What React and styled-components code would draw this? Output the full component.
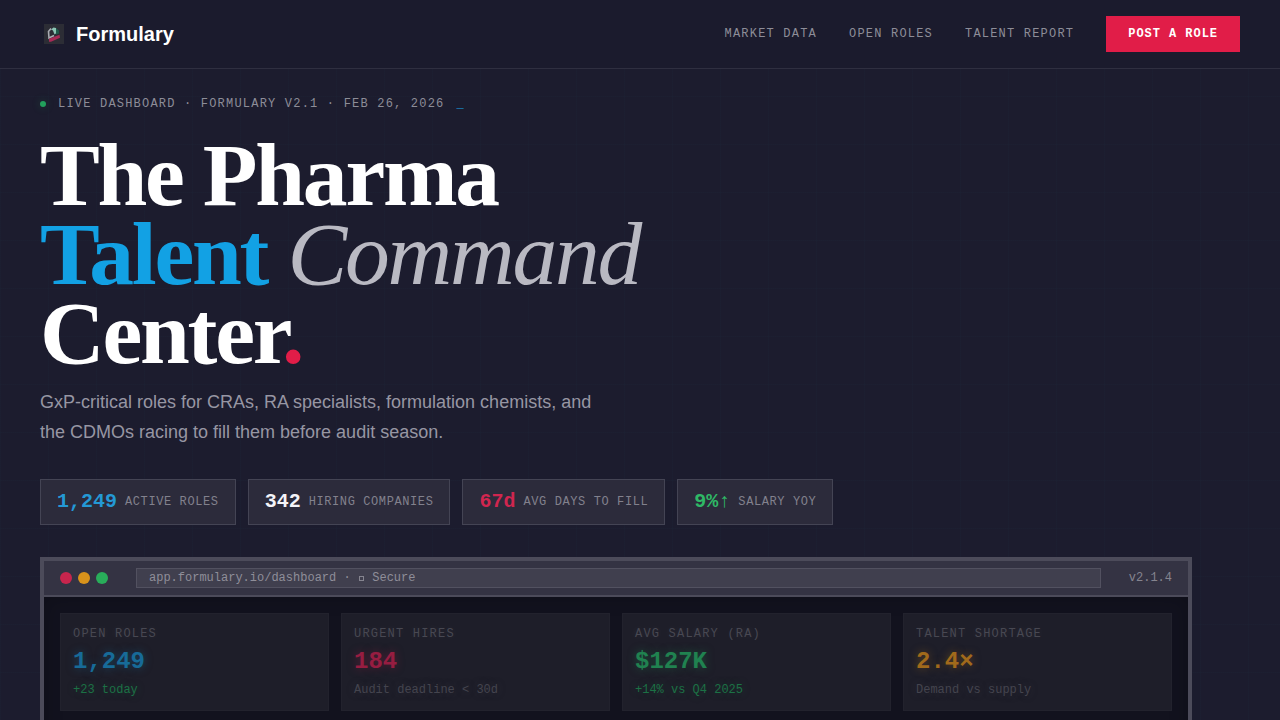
import React from 'react';
import styled, { createGlobalStyle } from 'styled-components';

const GlobalStyle = createGlobalStyle`
	* {
		box-sizing: border-box;
		margin: 0;
		padding: 0;
	}
	body {
		background-color: #1c1c2e;
		color: #ffffff;
		font-family: 'Liberation Sans', Arial, sans-serif;
		overflow: hidden;
	}
`;

const MONO = "'Liberation Mono', 'Courier New', monospace";

const COLORS = {
	blue: '#12a1e4',
	red: '#e11d48'
};

const S = {
	Page: styled.div`
		height: 720px;
		overflow: hidden;
		background-color: #1c1c2e;
		background-image: linear-gradient(rgba(14, 165, 233, 0.015) 1px, transparent 1px),
			linear-gradient(90deg, rgba(14, 165, 233, 0.015) 1px, transparent 1px);
		background-size: 48px 48px;
	`,
	Header: styled.header`
		height: 69px;
		padding: 0 40px;
		display: flex;
		align-items: center;
		justify-content: space-between;
		background-color: #1b1b2d;
		border-bottom: 1px solid #2f2f40;
	`,
	Brand: styled.div`
		display: flex;
		align-items: center;
		gap: 8px;
		font-size: 20px;
		font-weight: 700;
	`,
	Nav: styled.nav`
		display: flex;
		align-items: center;
		gap: 32px;
	`,
	NavLink: styled.a`
		font-family: ${MONO};
		font-size: 12px;
		letter-spacing: 0.1em;
		color: #8d8d98;
	`,
	PostButton: styled.button`
		height: 36px;
		padding: 0 22px;
		border: none;
		background-color: ${COLORS.red};
		color: #ffffff;
		font-family: ${MONO};
		font-size: 12px;
		font-weight: 700;
		letter-spacing: 0.08em;
	`,
	Hero: styled.section`
		padding: 28px 40px 0;
	`,
	Eyebrow: styled.div`
		display: flex;
		align-items: center;
		gap: 12px;
		height: 14px;
		font-family: ${MONO};
		font-size: 12px;
		letter-spacing: 0.1em;
		color: #8d8d98;
	`,
	LiveDot: styled.i`
		width: 6px;
		height: 6px;
		border-radius: 50%;
		background-color: #22a05c;
		box-shadow: 0 0 8px rgba(34, 197, 94, 0.25);
	`,
	Cursor: styled.span`
		color: #1a8fd0;
	`,
	Title: styled.h1`
		margin-top: 25px;
		font-family: 'Liberation Serif', 'Times New Roman', serif;
		font-size: 89.6px;
		font-weight: 700;
		line-height: 0.88;
		letter-spacing: -0.025em;
		white-space: nowrap;
		em {
			font-weight: 400;
			color: #b9b9c2;
		}
	`,
	Accent: styled.span`
		color: ${(props) => props.$color};
	`,
	Lead: styled.p`
		width: 580px;
		margin-top: 14.5px;
		font-size: 18px;
		line-height: 30px;
		color: #9796a3;
	`,
	Stats: styled.div`
		display: flex;
		gap: 12px;
		margin-top: 32px;
	`,
	Stat: styled.div`
		height: 46px;
		padding: 0 16px;
		display: flex;
		align-items: center;
		gap: 8px;
		border: 1px solid #444454;
		background-color: #2c2b3b;
		font-family: ${MONO};
	`,
	StatValue: styled.strong`
		font-size: 20px;
		line-height: 22px;
		color: ${(props) => props.$color};
	`,
	StatLabel: styled.span`
		font-size: 12px;
		letter-spacing: 0.05em;
		color: #82818d;
	`,
	Window: styled.div`
		width: 1152px;
		height: 440px;
		margin-top: 32px;
		display: flex;
		flex-direction: column;
		border: 4px solid #4c4b5a;
		background-color: #12121e;
	`,
	TitleBar: styled.div`
		height: 36px;
		padding: 0 16px;
		display: flex;
		flex: none;
		align-items: center;
		gap: 16px;
		border-bottom: 2px solid #4c4b5a;
		background-color: #343343;
		font-family: ${MONO};
		font-size: 12px;
	`,
	Lights: styled.div`
		display: flex;
		gap: 6px;
	`,
	Light: styled.i`
		width: 12px;
		height: 12px;
		border-radius: 50%;
		background-color: ${(props) => props.$color};
	`,
	Address: styled.div`
		flex: 1;
		height: 20px;
		margin: 0 12px;
		padding: 0 12px;
		border: 1px solid #525160;
		background-color: #403f4e;
		line-height: 18px;
		color: #8f8e99;
	`,
	SecureMark: styled.i`
		display: inline-block;
		width: 5px;
		height: 5px;
		margin: 0 1.2px 0 1px;
		border: 1px solid #85848f;
	`,
	Version: styled.span`
		color: #85848f;
	`,
	Screen: styled.div`
		flex: 1;
		padding: 16px;
		box-shadow: inset 0 0 20px rgba(0, 0, 0, 0.2);
	`,
	Metrics: styled.div`
		display: grid;
		grid-template-columns: repeat(4, 1fr);
		gap: 12px;
	`,
	Metric: styled.div`
		height: 98px;
		padding: 13px 12px 12px;
		display: flex;
		flex-direction: column;
		border: 1px solid #22222d;
		background-color: #1e1e29;
		font-family: ${MONO};
		font-size: 12px;
	`,
	MetricLabel: styled.span`
		line-height: 14px;
		letter-spacing: 0.1em;
		color: #484852;
		text-shadow: 0 0 8px rgba(255, 255, 255, 0.1);
	`,
	MetricValue: styled.strong`
		margin-top: 7px;
		font-size: 24px;
		line-height: 27px;
		color: ${(props) => props.$color};
		text-shadow: 0 0 8px ${(props) => props.$color}80;
	`,
	MetricNote: styled.span`
		margin-top: 8px;
		line-height: 14px;
		color: ${(props) => props.$color};
		text-shadow: 0 0 8px ${(props) => props.$color}66;
	`
};

const NAV_ITEMS = ['MARKET DATA', 'OPEN ROLES', 'TALENT REPORT'];

const STATS = [
	{ value: '1,249', label: 'ACTIVE ROLES', color: '#2499d5' },
	{ value: '342', label: 'HIRING COMPANIES', color: '#f4f4f8' },
	{ value: '67d', label: 'AVG DAYS TO FILL', color: '#d0264f' },
	{ value: '9%↑', label: 'SALARY YOY', color: '#2fb866' }
];

const METRICS = [
	{ label: 'OPEN ROLES', value: '1,249', note: '+23 today', color: '#176b98', noteColor: '#1c7145' },
	{ label: 'URGENT HIRES', value: '184', note: 'Audit deadline < 30d', color: '#971d41', noteColor: '#44444e' },
	{ label: 'AVG SALARY (RA)', value: '$127K', note: '+14% vs Q4 2025', color: '#208250', noteColor: '#1c7145' },
	{ label: 'TALENT SHORTAGE', value: '2.4×', note: 'Demand vs supply', color: '#a16a1b', noteColor: '#44444e' }
];

const Logo = () => (
	<svg width="28" height="28" viewBox="0 0 28 28">
		<rect x="4" y="4" width="20" height="20" fill="#2c2d35" />
		<path d="M11 8.5 L8.5 11.5 L9 18 L14 15.5" fill="none" stroke="#a9abb2" strokeWidth="1.6" />
		<path d="M11 9.5 L13.5 7.5 L16 8 L16.5 13 L14.5 14.5 L13 10.5 Z" fill="#8cc4b4" />
		<path d="M16 8 L19 10.5 L19 13.5 L16 14.5 Z" fill="#1f5a4a" />
		<path d="M9 18.8 L19.5 14.8 L20 17.8 L11 21.8 L9 21.8 Z" fill="#a82a56" />
	</svg>
);

const App = () => {
	return (
		<>
			<GlobalStyle />
			<S.Page>
				<S.Header>
					<S.Brand>
						<Logo />
						Formulary
					</S.Brand>
					<S.Nav>
						{NAV_ITEMS.map((item) => (
							<S.NavLink key={item}>{item}</S.NavLink>
						))}
						<S.PostButton>POST A ROLE</S.PostButton>
					</S.Nav>
				</S.Header>
				<S.Hero>
					<S.Eyebrow>
						<S.LiveDot />
						<span>LIVE DASHBOARD · FORMULARY V2.1 · FEB 26, 2026</span>
						<S.Cursor>_</S.Cursor>
					</S.Eyebrow>
					<S.Title>
						The Pharma
						<br />
						<S.Accent $color={COLORS.blue}>Talent</S.Accent> <em>Command</em>
						<br />
						Center<S.Accent $color={COLORS.red}>.</S.Accent>
					</S.Title>
					<S.Lead>
						GxP-critical roles for CRAs, RA specialists, formulation chemists, and the CDMOs racing to fill them
						before audit season.
					</S.Lead>
					<S.Stats>
						{STATS.map((stat) => (
							<S.Stat key={stat.label}>
								<S.StatValue $color={stat.color}>{stat.value}</S.StatValue>
								<S.StatLabel>{stat.label}</S.StatLabel>
							</S.Stat>
						))}
					</S.Stats>
					<S.Window>
						<S.TitleBar>
							<S.Lights>
								<S.Light $color="#c7254d" />
								<S.Light $color="#d8921b" />
								<S.Light $color="#29ad5a" />
							</S.Lights>
							<S.Address>
								app.formulary.io/dashboard · <S.SecureMark /> Secure
							</S.Address>
							<S.Version>v2.1.4</S.Version>
						</S.TitleBar>
						<S.Screen>
							<S.Metrics>
								{METRICS.map((metric) => (
									<S.Metric key={metric.label}>
										<S.MetricLabel>{metric.label}</S.MetricLabel>
										<S.MetricValue $color={metric.color}>{metric.value}</S.MetricValue>
										<S.MetricNote $color={metric.noteColor}>{metric.note}</S.MetricNote>
									</S.Metric>
								))}
							</S.Metrics>
						</S.Screen>
					</S.Window>
				</S.Hero>
			</S.Page>
		</>
	);
};

export default App;
